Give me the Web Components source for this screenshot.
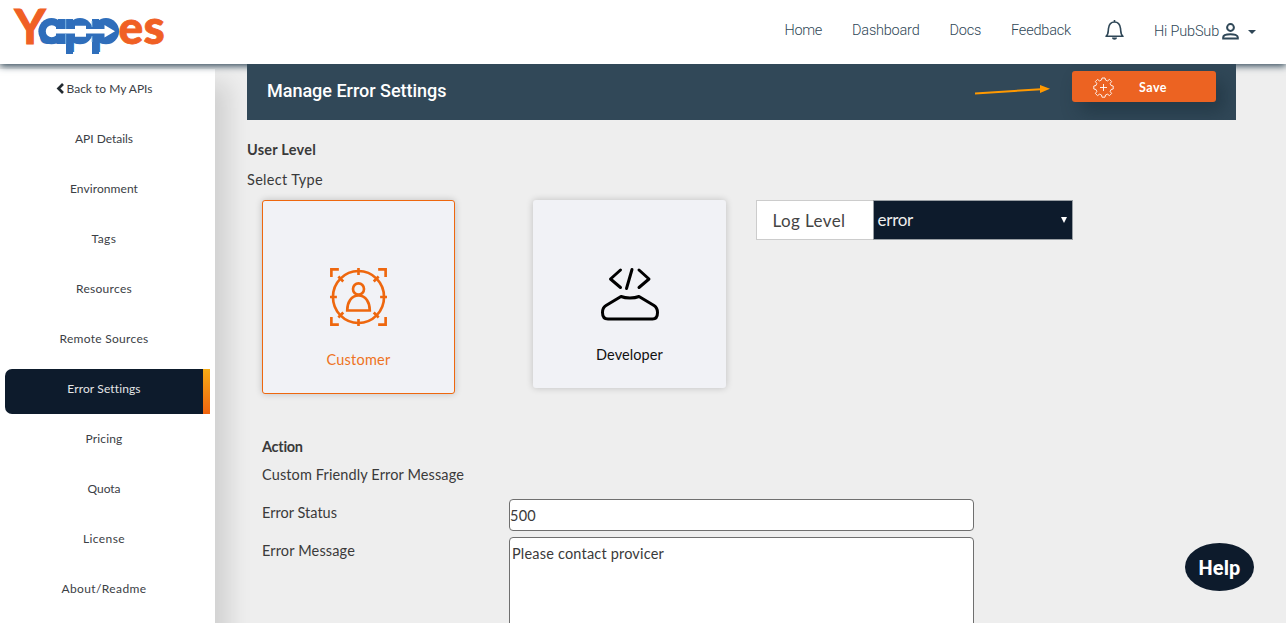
<!DOCTYPE html>
<html lang="en">
<head>
<meta charset="utf-8">
<title>Yappes - Manage Error Settings</title>
<style>
html,body{margin:0;height:100%;overflow:hidden;background:#eee}
body{font-family:Lato,"Open Sans",sans-serif;color:#3a3a3a}
</style>
</head>
<body>
<yp-app></yp-app>
<script>
function define(name, html, setup) {
  const t = document.createElement('template');
  t.innerHTML = html;
  customElements.define(name, class extends HTMLElement {
    connectedCallback() {
      if (this.shadowRoot) return;
      this.attachShadow({mode: 'open'}).appendChild(t.content.cloneNode(true));
      if (setup) setup(this, this.shadowRoot);
    }
  });
}

/* A single line of text tracked to occupy a given width. */
define('yp-text', `<style>:host{display:inline-block;white-space:nowrap}span{display:inline-block}</style><span><slot></slot></span>`, (el, root) => {
  const w = +el.getAttribute('w'), s = root.querySelector('span');
  if (!w) return;
  const n = el.textContent.length;
  const ls = (w - s.getBoundingClientRect().width) / n;
  s.style.letterSpacing = ls.toFixed(3) + 'px';
});

define('yp-logo', `<style>:host{display:block;width:152px;height:56px}svg{display:block;overflow:visible}text{font-family:Lato,sans-serif;font-weight:900}</style>
<svg width="152" height="56" viewBox="14 4 152 56">
<text y="43.500" font-size="48" fill="#f06024"><tspan x="14.500" font-weight="700" stroke="#f06024" stroke-width="1.200">Y</tspan><tspan x="39" fill="#2f6ebb">a</tspan><tspan x="64.500" fill="#2f6ebb">p</tspan><tspan x="90.500" fill="#2f6ebb">p</tspan><tspan x="118.500" font-size="46" font-weight="900" stroke="#f06024" stroke-width=".8">e</tspan><tspan x="143.500" font-size="48" stroke="#f06024" stroke-width=".8">s</tspan></text>
<g fill="#2f6ebb"><circle cx="51.500" cy="31.200" r="13.100"/><circle cx="80" cy="31.200" r="13.100"/><circle cx="106" cy="31.200" r="13.100"/><path d="M58 19h15v25H58zM66 19h7v35h-7zM92 19h7v35h-7z"/></g>
<path d="M56 27a6 6 0 1 0 0 8.500v-2h19v3.200h11v-3.200h18.500v4L115 31.200 104.500 25v4H86v-3.200H75V29H56z" fill="#fff"/>
<path d="M65.700 19v10M65.700 34v10M92 21v6M92 36v6" stroke="#86bde8" stroke-width=".9"/>
</svg>`);

define('yp-header', `<style>
:host{display:flex;box-sizing:border-box;height:64px;background:#fff;box-shadow:0 2px 7px #2f4757;padding:0 30px 0 14px;justify-content:space-between;position:relative;z-index:2;font:300 14.500px Roboto,sans-serif;color:#2f4757}
yp-logo{margin-top:4px}
nav{display:flex;height:60px;align-items:center}
.a{margin-right:30px}.bell{margin:0 29px 0 3px}.user{display:flex;align-items:center;margin-top:2px}
svg{display:block;flex:none}
</style>
<yp-logo></yp-logo>
<nav>
<yp-text class="a" w="37.500">Home</yp-text><yp-text class="a" w="67.500">Dashboard</yp-text><yp-text class="a" w="31.500">Docs</yp-text><yp-text class="a" w="60">Feedback</yp-text>
<svg class="bell" width="21" height="22" viewBox="0 0 21 22" fill="none" stroke="#2f4757" stroke-width="1.600"><path d="M10.500 1v2M2 17.300c2.800-2 2-5 2.500-8C5 5.500 7.200 3 10.500 3s5.500 2.500 6 6.300c.5 3-.3 6 2.500 8z" stroke-linejoin="round"/><path d="M8 18.500h5c0 3-5 3-5 0z" fill="#2f4757" stroke="none"/></svg>
<span class="user"><yp-text w="65">Hi PubSub</yp-text>
<svg style="margin:1px 0 0 3px" width="17" height="17" viewBox="0 0 17 17" fill="none" stroke="#2f4757" stroke-width="2"><circle cx="8.500" cy="4.500" r="3.400"/><path d="M1.200 15.600v-1.300c0-4.200 14.600-4.200 14.600 0v1.300z"/></svg>
<svg style="margin:2px 0 0 9px" width="8" height="4"><path d="M0 0h8l-4 4z" fill="#2f4757"/></svg></span>
</nav>`);

define('yp-side-item', `<style>
:host{display:flex;box-sizing:border-box;height:45px;margin:0 5px 5px;padding:0 7px 6px 0;align-items:center;justify-content:center;font-size:12px;line-height:15px;color:#3b4045;border-radius:7px 0 0 7px}
:host([active]){background:linear-gradient(#f5ab16,#f0640f) right/7px 100% no-repeat,#0d1b2c;color:#e4e6e8}
</style><slot name="icon"></slot><yp-text></yp-text>`, (el, root) => {
  const old = root.querySelector('yp-text'), t = document.createElement('yp-text');
  t.setAttribute('w', el.getAttribute('w')); t.textContent = el.getAttribute('label');
  old.replaceWith(t);
});

define('yp-sidebar', `<style>
:host{display:block;width:215px;box-sizing:border-box;height:570px;background:#fff;box-shadow:14px 14px 22px rgba(0,0,0,.12);flex:none}
svg{margin-right:2px;display:block}
</style>
<yp-side-item label="Back to My APIs" w="86"><svg slot="icon" width="9" height="11" viewBox="0 0 9 11"><path d="M7 1 2.500 5.500 7 10" fill="none" stroke="#222a30" stroke-width="2.700"/></svg></yp-side-item>
<yp-side-item label="API Details" w="58"></yp-side-item>
<yp-side-item label="Environment" w="68"></yp-side-item>
<yp-side-item label="Tags" w="25"></yp-side-item>
<yp-side-item label="Resources" w="56"></yp-side-item>
<yp-side-item label="Remote Sources" w="89"></yp-side-item>
<yp-side-item label="Error Settings" w="73" active></yp-side-item>
<yp-side-item label="Pricing" w="37"></yp-side-item>
<yp-side-item label="Quota" w="33"></yp-side-item>
<yp-side-item label="License" w="42"></yp-side-item>
<yp-side-item label="About/Readme" w="85"></yp-side-item>`);

define('yp-save', `<style>
:host{display:flex;box-sizing:border-box;width:144px;height:31px;border-radius:3px;background:#ec6322;box-shadow:8px 10px 18px rgba(20,40,50,.45);align-items:center;padding:2px 0 0 21px;color:#fff;font:700 12.500px Lato,sans-serif}
yp-text{margin-left:25px}
</style>
<svg width="21" height="21" viewBox="-10.500 -10.500 21 21" fill="none" stroke="#fff" stroke-width=".9"><path d="M-2-7.500-1.500-9.500h3L2-7.500l2 .9 2-1.500L8.100-6 6.700-4l.8 2 2.200.5v3L7.500 2 6.700 4l1.400 2L6 8.100 4 6.700l-2 .8-.5 2.200h-3L-2 7.500l-2-.8-2 1.400L-8.100 6-6.700 4l-.8-2-2.200-.5v-3L-7.500-2l.8-2-1.400-2L-6-8.100l2 1.500zM-3.500 0h7M0-3.500v7"/></svg>
<yp-text w="28">Save</yp-text>`);

define('yp-titlebar', `<style>
:host{display:flex;box-sizing:border-box;width:989px;height:56px;background:#314858;padding:7px 20px 0;position:relative;z-index:3;overflow:hidden}
h1{margin:9px 0 0;font:500 18px/21px Roboto,sans-serif;color:#fff;flex:1}
.arrow{margin:13px 22px 0 0}
</style>
<h1><yp-text w="179.500">Manage Error Settings</yp-text></h1>
<svg class="arrow" width="75" height="12" viewBox="0 0 75 12"><path d="M0 9.500 66 5.200" stroke="#f90" stroke-width="2"/><path d="M65 1 75 4.800 65 9z" fill="#f90"/></svg>
<yp-save></yp-save>`);

define('yp-card', `<style>
:host{display:flex;flex-direction:column;box-sizing:border-box;width:193px;height:188px;background:#f1f2f6;border-radius:3px;box-shadow:0 0 7px rgba(0,0,0,.2);align-items:center;padding-top:67px;color:#111;font-size:14.500px}
:host([selected]){height:194px;border:1px solid #ee670e;color:#ee7222}
.pic{height:60px}
.label{margin-top:18px;line-height:20px}
:host([selected]) .label{margin-top:22px}
</style><div class="pic"><slot name="icon"></slot></div><div class="label"><slot></slot></div>`);

define('yp-log-level', `<style>
:host{display:flex;box-sizing:border-box;width:317px;height:40px;font-size:17px}
.l{box-sizing:border-box;width:117px;border:1px solid #ccc;border-right:0;background:#fff;padding:2px 0 0 15.500px;display:flex;align-items:center;color:#444}
.s{box-sizing:border-box;width:200px;border:1px solid #999fa4;background:#0d1b2c;color:#eee;display:flex;align-items:center;justify-content:space-between;padding:0 5px 0 3.500px}
</style><div class="l"><yp-text w="73">Log Level</yp-text></div><div class="s"><yp-text w="35.500">error</yp-text><svg width="6" height="6" style="margin-bottom:1px"><path d="M0 0h6L3 6z" fill="#fff"/></svg></div>`);

define('yp-field', `<style>
:host{display:flex;font-size:14.500px;align-items:flex-start}
.l{width:247px;line-height:20px;padding-top:4px;flex:none}
.b{box-sizing:border-box;width:465px;height:32px;border:1px solid #6f6f6f;border-radius:4px;background:#fff;line-height:20px;padding:6px 0 0}
:host([area]) .b{height:110px;padding:6px 0 0 2px}
</style><div class="l"><slot name="label"></slot></div><div class="b"><slot></slot></div>`);

define('yp-help', `<style>:host{display:flex;width:69px;height:48px;border-radius:50%;background:#0d1b2c;color:#fff;align-items:center;justify-content:center;font:700 20px Roboto,sans-serif;position:absolute;right:32px;bottom:32px;z-index:5}yp-text{margin-top:2px}</style><yp-text w="42">Help</yp-text>`);

define('yp-app', `<style>
:host{display:block;height:623px;overflow:hidden;position:relative}
.body{display:flex;height:559px}
yp-sidebar{margin-top:5px}
main{margin-left:32px;font-size:14.500px;line-height:20px;flex:1;position:relative}
.h{font-weight:700;display:block;margin-top:20px}
.t{display:block;margin-top:10px}
.cards{display:flex;padding:10px 0 0 15px;align-items:flex-start}
.cards svg{display:block}
.action{padding:43px 0 0 15px}
</style>
<yp-header></yp-header>
<div class="body">
<yp-sidebar></yp-sidebar>
<main>
<yp-titlebar></yp-titlebar>
<div class="h"><yp-text w="69">User Level</yp-text></div>
<div class="t"><yp-text w="76">Select Type</yp-text></div>
<div class="cards">
<yp-card selected><svg slot="icon" width="57" height="58" viewBox="0 0 58 58" preserveAspectRatio="none" fill="none" stroke="#ee670e" stroke-width="2.700"><path d="M1.400 9V1.400H9M49 1.400h7.600V9M56.600 49v7.600H49M9 56.600H1.400V49"/><circle cx="29" cy="29" r="26"/><path d="M29 0v7M29 51v7M0 29h7M51 29h7M8.500 8.500l5 5M44.500 44.500l5 5M49.500 8.500l-5 5M13.500 44.500l-5 5"/><circle cx="29" cy="21" r="5.600"/><path d="M17.500 42.500c0-8 4-15 11.500-15s11.500 7 11.500 15z"/></svg><yp-text w="64">Customer</yp-text></yp-card>
<yp-card style="margin:0 30px 0 78px"><svg slot="icon" width="58" height="58" viewBox="0 0 58 58" fill="none" stroke="#000" stroke-width="3" stroke-linecap="round" stroke-linejoin="round"><path d="M19.500 3 9.500 12 19.500 20.500M38 3l10 9L38 20.500M31 2.500l-5.500 19M20 29.500c5 2 13 2 18 0l15 9c3 2 3.500 4 3.500 7 0 4-1.500 6.500-5 6.500H7c-4 0-5.500-2.500-5.500-6.500 0-4 1-5.500 3.500-7z"/></svg><yp-text w="67">Developer</yp-text></yp-card>
<yp-log-level></yp-log-level>
</div>
<div class="action">
<yp-text style="display:block;font-weight:700" w="41">Action</yp-text>
<yp-text style="display:block;margin-top:8px" w="202">Custom Friendly Error Message</yp-text>
<yp-field style="margin-top:14px"><yp-text slot="label" w="75">Error Status</yp-text><yp-text w="26">500</yp-text></yp-field>
<yp-field area style="margin-top:6px"><yp-text slot="label" w="93">Error Message</yp-text><yp-text w="152">Please contact provicer</yp-text></yp-field>
</div>
</main>
</div>
<yp-help></yp-help>`);
</script>
</body>
</html>
